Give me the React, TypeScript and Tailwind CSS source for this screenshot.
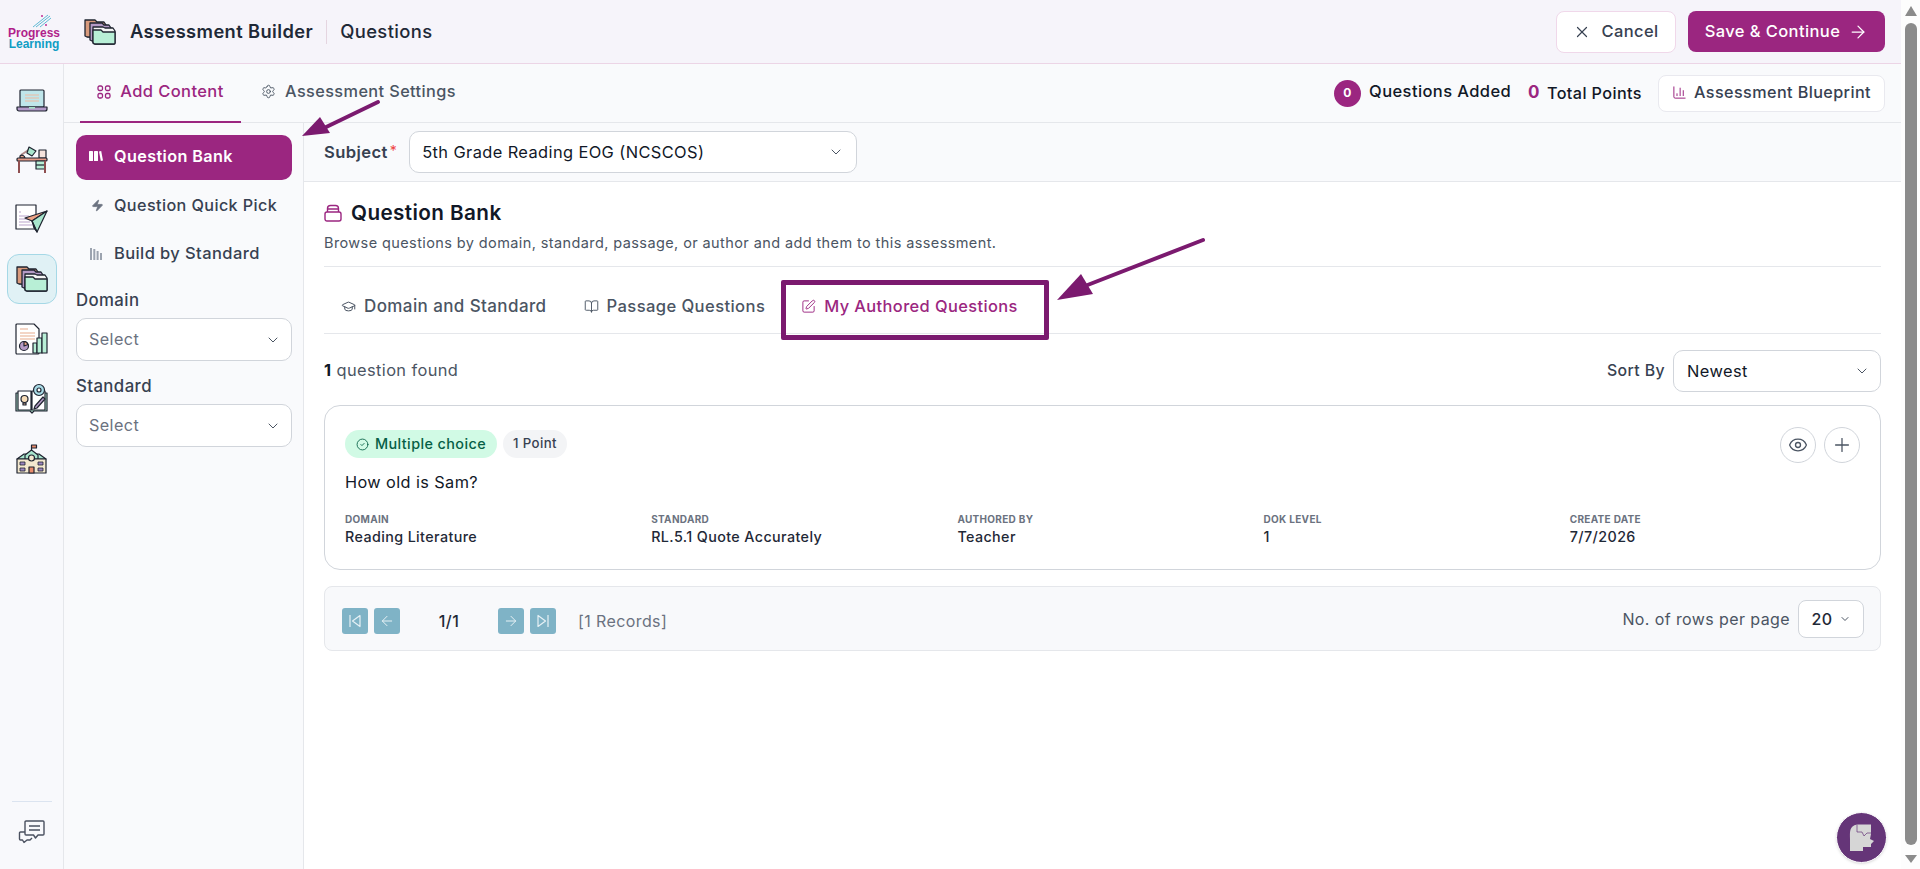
// App.tsx
import React from 'react';
import {
  ArrowLeft,
  ArrowRight,
  BookOpen,
  ChartColumn,
  ChevronDown,
  CircleCheck,
  Eye,
  GraduationCap,
  Plus,
  Settings,
  SquarePen,
  X,
  Zap,
} from 'lucide-react';

const ink = '#1f2430';

const FoldersIcon: React.FC<{ size?: number }> = ({ size = 32 }) => (
  <svg width={size} height={size} viewBox="0 0 32 32" fill="none" stroke={ink} strokeWidth="1.3" strokeLinejoin="round">
    <path d="M1 4h10l2 2h7l2 3v13L3 21l-2-1z" fill="#d89a7c" />
    <path d="M6 7h12l2 2h5l2 3v12L8 25l-2-1z" fill="#b59bc6" />
    <path d="M9 11h10l2 1h8l2 3v12a1 1 0 0 1-1 1H11l-2-1z" fill="#f5f5f5" />
    <path d="M9 14h8l2 2h12v11a1 1 0 0 1-1 1H11a2 2 0 0 1-2-2z" fill="#b8efd6" />
  </svg>
);

const LaptopIcon = () => (
  <svg width="32" height="24" viewBox="0 0 32 24" fill="none" stroke={ink} strokeWidth="1.2" strokeLinejoin="round" className="mt-[3px]">
    <rect x="4" y="1" width="24" height="17" rx="1" fill="#bfe6ea" />
    <path d="M9 6h14M9 9h14M9 12h14" stroke="#efb9a0" />
    <path d="M1 18h30v2a2 2 0 0 1-2 2H3a2 2 0 0 1-2-2z" fill="#b39ac8" />
    <path d="M13 18h6v1.6h-6z" fill="#a5e3c6" stroke="none" />
  </svg>
);

const DeskIcon = () => (
  <svg width="32" height="32" viewBox="0 0 32 32" fill="none" stroke={ink} strokeWidth="1.2" strokeLinejoin="round">
    <path d="M5 12l9-6" stroke="#b08a8a" strokeWidth="2" />
    <path d="M13 4l7 4-4 5-5-3z" fill="#a8e6cd" />
    <path d="M4 13a3 3 0 0 1 5 2H4z" fill="#e9a38a" />
    <rect x="23" y="7" width="7" height="8" fill="#f5e3dc" />
    <rect x="1" y="15" width="30" height="3" rx="1" fill="#e79a86" />
    <rect x="20" y="18" width="9" height="8" fill="#b8efd6" />
    <path d="M20 22h9" />
    <path d="M3 18v12M29 18v12" stroke="#8f4f50" strokeWidth="2" />
  </svg>
);

const PlaneIcon = () => (
  <svg width="33" height="30" viewBox="0 0 33 30" fill="none" stroke={ink} strokeWidth="1.2" strokeLinejoin="round">
    <rect x="1" y="1" width="20" height="24" fill="#fff" />
    <path d="M4 8h2M4 12h10M4 15h9M4 18h11M4 21h13" stroke="#b9a4cc" />
    <path d="M32 7L10 14l7 3z" fill="#eea385" />
    <path d="M32 7L17 17l5 11z" fill="#a8e6cd" />
    <path d="M17 17l2 7 3 4z" fill="#7fb7c4" />
  </svg>
);

const ReportIcon = () => (
  <svg width="33" height="32" viewBox="0 0 33 32" fill="none" stroke={ink} strokeWidth="1.2" strokeLinejoin="round">
    <path d="M1 2a1 1 0 0 1 1-1h17l5 5v24a1 1 0 0 1-1 1H2a1 1 0 0 1-1-1z" fill="#fff" />
    <path d="M5 6h8M5 10h15M5 13h15M5 16h15" stroke="#f0c8b4" strokeWidth="1.5" />
    <circle cx="9" cy="23" r="4.5" fill="#b59bc6" />
    <path d="M9 23v-4.5a4.5 4.5 0 0 1 4 3z" fill="#eea385" />
    <rect x="18" y="20" width="4" height="10" fill="#b8efd6" />
    <rect x="22" y="15" width="5" height="15" fill="#b8efd6" />
    <rect x="27" y="10" width="5" height="20" fill="#b8efd6" />
  </svg>
);

const BookIcon = () => (
  <svg width="33" height="32" viewBox="0 0 33 32" fill="none" stroke={ink} strokeWidth="1.2" strokeLinejoin="round">
    <path d="M1 10h31v18H19l-2 2-2-2H1z" fill="#b8efd6" />
    <path d="M3 8h13v19H3zM17 8h13v19H17z" fill="#fff" />
    <circle cx="9.5" cy="16" r="3.5" fill="#f6dcb8" />
    <path d="M8 20h3v2H8z" fill="#cfa98d" />
    <path d="M19 26l1-3 8-9 2 2-8 9z" fill="#b59bc6" />
    <circle cx="24" cy="7" r="5.5" fill="#a8dbe6" />
    <circle cx="24" cy="7" r="2" fill="#fff" />
  </svg>
);

const SchoolIcon = () => (
  <svg width="33" height="30" viewBox="0 0 33 30" fill="none" stroke={ink} strokeWidth="1.2" strokeLinejoin="round">
    <path d="M16.500 6V1h5v3h-5" fill="#e98c6c" />
    <path d="M2 15l7-5h15l7 5z" fill="#a8e6cd" />
    <path d="M10 11l6.500-5 6.500 5v4H10z" fill="#a8e6cd" />
    <rect x="2" y="15" width="29" height="14" fill="#f3e8cf" />
    <circle cx="16.500" cy="14" r="3" fill="#f3e8cf" />
    <path d="M14 23h5v6h-5z" fill="#e98c6c" />
    <path d="M5 18h5v3H5zM5 24h5v3H5zM23 18h5v3h-5zM23 24h5v3h-5z" fill="#9c86c0" strokeWidth="0.8" />
  </svg>
);

const ChatsIcon = () => (
  <svg width="28" height="24" viewBox="0 0 28 24" fill="none" stroke="#4a5160" strokeWidth="1.4" strokeLinejoin="round">
    <path d="M7 12H2.500a1 1 0 0 0-1 1v6a1 1 0 0 0 1 1h2l1.500 2.500L9 20h3l2-2" />
    <path d="M7 2a1 1 0 0 1 1-1h17a1 1 0 0 1 1 1v12a1 1 0 0 1-1 1h-5l-2.500 3-2-3H8a1 1 0 0 1-1-1z" fill="#f8f9fc" />
    <path d="M11 6h11M11 10h11" />
  </svg>
);

const BankIcon = () => (
  <svg width="14" height="12" viewBox="0 0 14 12" fill="#fff">
    <rect x="0" y="1" width="4" height="10" rx="0.6" />
    <rect x="5" y="1" width="4" height="10" rx="0.6" />
    <path d="M10 1.400l2.200-.4 1.800 9.600-2.200.4z" />
  </svg>
);

const BarsIcon = () => (
  <svg width="12" height="12" viewBox="0 0 12 12" fill="#9ca3af">
    <rect x="0" y="0" width="2" height="12" />
    <rect x="3.300" y="1" width="2" height="11" />
    <rect x="6.600" y="3" width="2" height="9" />
    <rect x="10" y="5" width="2" height="7" />
  </svg>
);

const GridIcon = () => (
  <svg width="14" height="14" viewBox="0 0 14 14" fill="none" stroke="#9b2680" strokeWidth="1.3">
    <rect x="1" y="1" width="4.500" height="4.500" rx="1.500" />
    <rect x="8.500" y="1" width="4.500" height="4.500" rx="1.500" />
    <rect x="1" y="8.500" width="4.500" height="4.500" rx="1.500" />
    <rect x="8.500" y="8.500" width="4.500" height="4.500" rx="1.500" />
  </svg>
);

const BagIcon = () => (
  <svg width="18" height="18" viewBox="0 0 18 18" fill="none" stroke="#9b2680" strokeWidth="1.4" strokeLinejoin="round">
    <rect x="1" y="8" width="16" height="9" rx="2" />
    <path d="M3.500 8V4.500a3 3 0 0 1 3-3h5a3 3 0 0 1 3 3V8M3.500 5h11" />
  </svg>
);

const EdgePageIcon: React.FC<{ flip?: boolean }> = ({ flip }) => (
  <svg width="14" height="14" viewBox="0 0 14 14" fill="none" stroke="#e6f1f5" strokeWidth="1.2" strokeLinejoin="round" className={flip ? 'rotate-180' : ''}>
    <path d="M2 1v12M12 1.500L4.500 7l7.500 5.500z" />
  </svg>
);

// annotation arrows sit over the page, so their box is absolute
const Arrow: React.FC<{ className: string; width: number; height: number; line: string; head: string }> = ({ className, width, height, line, head }) => (
  <svg width={width} height={height} viewBox={`0 0 ${width} ${height}`} className={`absolute ${className}`} fill="#7b1a6f" stroke="none">
    <path d={line} stroke="#7b1a6f" strokeWidth="4" strokeLinecap="round" fill="none" />
    <path d={head} />
  </svg>
);

const Select: React.FC<{ value: string; placeholder?: boolean; className: string }> = ({ value, placeholder, className }) => (
  <div className={`flex items-center justify-between bg-white border border-[#d1d5db] rounded-[10px] ${className}`}>
    <span className={placeholder ? 'text-[#6b7280]' : 'text-[#111827]'}>{value}</span>
    <ChevronDown size={16} strokeWidth={1.5} className="text-[#4b5563]" />
  </div>
);

const Meta: React.FC<{ label: string; value: string }> = ({ label, value }) => (
  <div>
    <div className="text-[10px] leading-[15px] font-bold uppercase tracking-[0.03em] text-[#6b7280]">{label}</div>
    <div className="text-[14.300px] leading-[20px] font-medium text-[#1f2937]">{value}</div>
  </div>
);

const PageButton: React.FC<{ children: React.ReactNode }> = ({ children }) => (
  <div className="w-[26px] h-[26px] rounded-[3px] bg-[#7fb3c6] flex items-center justify-center text-[#e6f1f5]">{children}</div>
);

const RailItem: React.FC<{ children: React.ReactNode; active?: boolean }> = ({ children, active }) => (
  <div className={`w-[50px] h-[50px] flex items-center justify-center rounded-[12px] border ${active ? 'bg-[#e0f1f5] border-[#a5d8e6]' : 'border-transparent'}`}>
    {children}
  </div>
);

export default function App() {
  return (
    <div className="relative flex h-[869px] overflow-hidden bg-white text-[#111827] tracking-[0.025em] font-['Inter','Noto_Sans',sans-serif]">
      <div className="flex-1 min-w-0 flex flex-col">
        {/* top header */}
        <header className="h-[64px] shrink-0 flex items-center justify-between bg-[#f6f4fa] border-b border-[#ecd5e6] pl-[10px] pr-[16px]">
          <div className="flex items-center">
            <div className="w-[48px] flex flex-col items-center font-['Liberation_Sans',sans-serif] font-bold text-[12px] leading-[11px] tracking-normal">
              <svg width="20" height="14" viewBox="0 0 20 14" fill="none" className="self-end mr-[6px]">
                <path d="M1 13L16 1M4 13L18 2M8 13L19 4" stroke="#38a9c9" strokeWidth="0.8" />
                <circle cx="10" cy="2" r="1" fill="#c02a93" />
                <circle cx="14" cy="11" r="1" fill="#c02a93" />
              </svg>
              <span className="text-[#b01f8a]">Progress</span>
              <span className="text-[#0f9dc4]">Learning</span>
            </div>
            <div className="ml-[26px] mr-[14px]">
              <FoldersIcon size={32} />
            </div>
            <span className="text-[18.300px] font-semibold text-[#1f2937]">Assessment Builder</span>
            <div className="w-px h-[24px] bg-[#e5d5e0] mx-[13px]" />
            <span className="text-[18.400px] font-medium text-[#1f2937]">Questions</span>
          </div>
          <div className="flex items-center gap-[12px]">
            <button className="w-[120px] h-[42px] flex items-center justify-center gap-[10px] bg-white border border-[#f0d8ea] rounded-[8px] text-[16.500px] font-medium text-[#374151]">
              <X size={18} strokeWidth={1.6} />
              Cancel
            </button>
            <button className="w-[197px] h-[41px] flex items-center justify-center gap-[8px] bg-[#9b2680] rounded-[8px] text-[16.500px] font-medium text-white">
              Save &amp; Continue
              <ArrowRight size={20} strokeWidth={1.5} />
            </button>
          </div>
        </header>

        <div className="flex-1 min-h-0 flex">
          {/* icon rail */}
          <aside className="w-[64px] shrink-0 bg-[#f8f9fc] border-r border-[#e5e7eb] flex flex-col items-center pt-[10px] gap-[10px]">
            <RailItem><LaptopIcon /></RailItem>
            <RailItem><DeskIcon /></RailItem>
            <RailItem><PlaneIcon /></RailItem>
            <RailItem active><FoldersIcon size={32} /></RailItem>
            <RailItem><ReportIcon /></RailItem>
            <RailItem><BookIcon /></RailItem>
            <RailItem><SchoolIcon /></RailItem>
            <div className="mt-auto w-[40px] border-t border-[#dbe4f0] pt-[18px] pb-[25px] flex justify-center">
              <ChatsIcon />
            </div>
          </aside>

          <div className="flex-1 min-w-0 flex flex-col">
            {/* tab strip */}
            <div className="h-[59px] shrink-0 flex items-stretch justify-between bg-[#f9fafc] border-b border-[#e5e7eb] pl-[16px] pr-[16px]">
              <div className="flex items-stretch">
                <div className="w-[161px] flex items-center justify-center gap-[9px] pb-[2px] border-b-2 border-[#9b2680] -mb-px text-[16.500px] font-medium text-[#9b2680]">
                  <GridIcon />
                  Add Content
                </div>
                <div className="ml-[20px] flex items-center gap-[9px] pb-[3px] text-[16.300px] font-medium text-[#4b5563]">
                  <Settings size={15} strokeWidth={1.5} />
                  Assessment Settings
                </div>
              </div>
              <div className="flex items-center">
                <div className="w-[27px] h-[27px] rounded-full bg-[#9b2680] text-white text-[12px] font-bold flex items-center justify-center">0</div>
                <span className="ml-[8px] -mt-[3px] text-[16.500px] font-medium text-[#111827]">Questions Added</span>
                <span className="ml-[17px] text-[17px] font-bold text-[#9b2680]">0</span>
                <span className="ml-[7px] text-[16.200px] font-medium text-[#111827]">Total Points</span>
                <div className="ml-[16px] h-[37px] w-[227px] flex items-center justify-center gap-[7px] pb-[1px] bg-white border border-[#e9e9ef] rounded-[8px] text-[16.200px] font-medium text-[#374151]">
                  <ChartColumn size={15} strokeWidth={1.6} className="text-[#9b2680]" />
                  Assessment Blueprint
                </div>
              </div>
            </div>

            <div className="flex-1 min-h-0 flex">
              {/* left filter panel */}
              <nav className="w-[240px] shrink-0 bg-[#f9fafc] border-r border-[#e5e7eb] pt-[12px] pl-[12px] pr-[11px]">
                <div className="h-[45px] flex items-center gap-[11px] pl-[13px] pb-[3px] bg-[#9b2680] rounded-[10px] text-[16.200px] font-semibold text-white">
                  <BankIcon />
                  Question Bank
                </div>
                <div className="mt-[2px] h-[48px] flex items-center gap-[10px] pl-[15px] pb-[1px] text-[16.200px] font-medium text-[#374151]">
                  <Zap size={13} strokeWidth={1.5} fill="#6b7280" className="text-[#6b7280]" />
                  Question Quick Pick
                </div>
                <div className="h-[48px] flex items-center gap-[12px] pl-[14px] pb-[1px] text-[16.500px] font-medium text-[#374151]">
                  <BarsIcon />
                  Build by Standard
                </div>
                <div className="mt-[11px] text-[16.800px] leading-[22px] font-medium text-[#374151]">Domain</div>
                <Select value="Select" placeholder className="mt-[7px] h-[43px] pl-[12px] pr-[10px] text-[16.200px]" />
                <div className="mt-[14px] text-[16.800px] leading-[22px] font-medium text-[#374151]">Standard</div>
                <Select value="Select" placeholder className="mt-[7px] h-[43px] pl-[12px] pr-[10px] text-[16.200px]" />
              </nav>

              <main className="flex-1 min-w-0 flex flex-col">
                {/* subject bar */}
                <div className="h-[59px] shrink-0 flex items-center pl-[20px] bg-[#f9fafc] border-b border-[#e5e7eb]">
                  <span className="text-[16.600px] font-semibold text-[#374151]">Subject</span>
                  <span className="text-[#ef4444] text-[14px] ml-[2px] self-center -mt-[4px]">*</span>
                  <Select value="5th Grade Reading EOG (NCSCOS)" className="ml-[12px] w-[448px] h-[42px] pl-[12px] pr-[12px] text-[16.400px]" />
                </div>

                <div className="flex-1 min-h-0 px-[20px] pt-[17px]">
                  <div className="flex items-center gap-[9px] h-[28px]">
                    <BagIcon />
                    <h1 className="text-[20.700px] font-semibold text-[#111827]">Question Bank</h1>
                  </div>
                  <p className="mt-[6px] text-[14.500px] leading-[20px] text-[#4b5563]">
                    Browse questions by domain, standard, passage, or author and add them to this assessment.
                  </p>

                  {/* source tabs */}
                  <div className="mt-[13px] h-[68px] border-y border-[#e5e7eb] flex items-center pl-[17px] pt-[13px] font-medium">
                    <div className="flex items-center gap-[8px] text-[17px] text-[#4b5563]">
                      <GraduationCap size={15} strokeWidth={1.6} />
                      Domain and Standard
                    </div>
                    <div className="ml-[37px] flex items-center gap-[8px] text-[16.600px] text-[#4b5563]">
                      <BookOpen size={15} strokeWidth={1.5} />
                      Passage Questions
                    </div>
                    <div className="ml-[36px] flex items-center gap-[8px] text-[16.400px] text-[#9b2680]">
                      <SquarePen size={15} strokeWidth={1.5} />
                      My Authored Questions
                    </div>
                  </div>

                  <div className="mt-[16px] h-[42px] flex items-center justify-between">
                    <div className="-mt-[1px] text-[16.400px] text-[#4b5563]">
                      <span className="font-bold text-[#111827]">1</span> question found
                    </div>
                    <div className="flex items-center gap-[8px]">
                      <span className="text-[15.800px] font-medium text-[#374151]">Sort By</span>
                      <Select value="Newest" className="w-[208px] h-[42px] pl-[13px] pr-[10px] text-[16.400px]" />
                    </div>
                  </div>

                  {/* question card */}
                  <div className="mt-[13px] h-[165px] bg-white border border-[#d1d5db] rounded-[16px] px-[20px] pt-[21px]">
                    <div className="flex items-start justify-between">
                      <div className="flex items-center gap-[6px] pt-[3px]">
                        <div className="h-[28px] px-[11px] rounded-full bg-[#d1fae5] flex items-center gap-[6px] text-[14.400px] font-medium text-[#065f46]">
                          <CircleCheck size={13} strokeWidth={1.6} />
                          Multiple choice
                        </div>
                        <div className="h-[28px] px-[10px] rounded-full bg-[#f3f4f6] flex items-center text-[13.200px] font-medium text-[#374151]">1 Point</div>
                      </div>
                      <div className="flex items-center gap-[8px]">
                        <div className="w-[36px] h-[36px] rounded-full border border-[#d1d5db] flex items-center justify-center text-[#4b5563]">
                          <Eye size={20} strokeWidth={1.6} />
                        </div>
                        <div className="w-[36px] h-[36px] rounded-full border border-[#d1d5db] flex items-center justify-center text-[#4b5563]">
                          <Plus size={22} strokeWidth={1.4} />
                        </div>
                      </div>
                    </div>
                    <div className="mt-[7px] text-[16.300px] leading-[24px] text-[#111827]">How old is Sam?</div>
                    <div className="mt-[18px] grid grid-cols-5 gap-4">
                      <Meta label="Domain" value="Reading Literature" />
                      <Meta label="Standard" value="RL.5.1 Quote Accurately" />
                      <Meta label="Authored By" value="Teacher" />
                      <Meta label="DOK Level" value="1" />
                      <Meta label="Create Date" value="7/7/2026" />
                    </div>
                  </div>

                  {/* pagination */}
                  <div className="mt-[16px] h-[65px] bg-[#f8f9fb] border border-[#e5e7eb] rounded-[8px] pl-[17px] pr-[16px] flex items-center justify-between">
                    <div className="flex items-center mt-[5px]">
                      <PageButton><EdgePageIcon /></PageButton>
                      <div className="ml-[6px]"><PageButton><ArrowLeft size={16} strokeWidth={1.5} /></PageButton></div>
                      <div className="w-[98px] text-center text-[16px] font-medium text-[#1f2937]">1/1</div>
                      <PageButton><ArrowRight size={16} strokeWidth={1.5} /></PageButton>
                      <div className="ml-[6px]"><PageButton><EdgePageIcon flip /></PageButton></div>
                      <span className="ml-[22px] text-[16px] text-[#6b7280]">[1 Records]</span>
                    </div>
                    <div className="flex items-center gap-[8px]">
                      <span className="text-[16px] text-[#4b5563]">No. of rows per page</span>
                      <div className="w-[66px] h-[38px] bg-white border border-[#d1d5db] rounded-[8px] flex items-center justify-center gap-[6px] text-[16px] font-medium text-[#1f2937]">
                        20
                        <ChevronDown size={12} strokeWidth={2} className="text-[#4b5563]" />
                      </div>
                    </div>
                  </div>
                </div>
              </main>
            </div>
          </div>
        </div>
      </div>

      {/* page scrollbar */}
      <div className="w-[19px] shrink-0 bg-[#fdfdfd] flex flex-col items-center pt-[6px] pb-[6px] pl-[1px]">
        <div className="w-0 h-0 border-x-[6px] border-x-transparent border-b-[10px] border-b-[#8b8b8b]" />
        <div className="mt-[7px] w-[12px] flex-1 rounded-full bg-[#8b8b8b]" />
        <div className="mt-[10px] w-0 h-0 border-x-[6px] border-x-transparent border-t-[8px] border-t-[#8b8b8b]" />
      </div>

      {/* screenshot annotations */}
      <Arrow className="left-[300px] top-[98px]" width={82} height={40} line="M78 4L20 32" head="M2 38L20 19L30 35Z" />
      <div className="absolute left-[781px] top-[280px] w-[268px] h-[60px] border-[5px] border-[#7b1a6f] rounded-[2px]" />
      <Arrow className="left-[1055px] top-[236px]" width={152} height={66} line="M148 4L30 50" head="M2 64L26 38L38 58Z" />

      {/* floating helper */}
      <div className="absolute left-[1836px] top-[812px] w-[51px] h-[51px] rounded-full bg-[#653578] border border-white shadow flex items-center justify-center">
        <svg width="26" height="28" viewBox="0 0 26 28">
          <path d="M8 0.500H22V10L21 15L25 17L22 20V23H14V27H1V15C1 8 0 2 8 0.500Z" fill="#d6d6d6" />
          <path d="M8 0.500V8H13L15 12L18 9H22" fill="none" stroke="#653578" strokeWidth="0.7" />
        </svg>
      </div>
    </div>
  );
}
